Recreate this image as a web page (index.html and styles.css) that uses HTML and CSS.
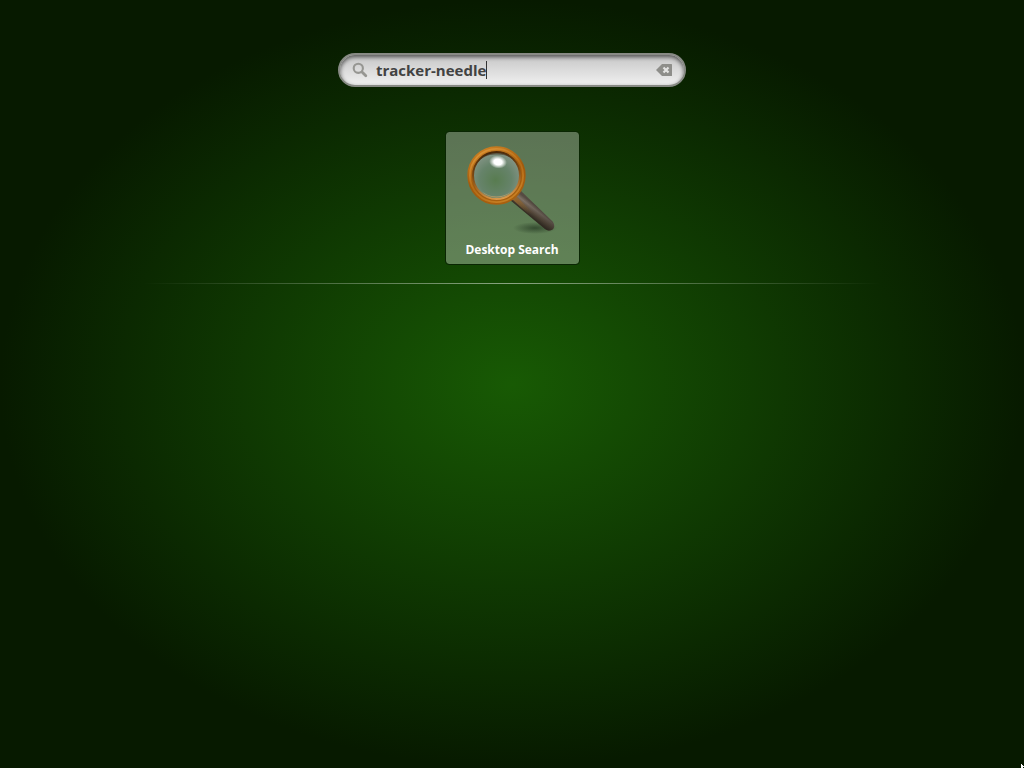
FILE: index.html
```html
<!DOCTYPE html>
<html lang="en">
<head>
<meta charset="utf-8">
<meta name="viewport" content="width=device-width, initial-scale=1">
<title>Overview</title>
<link rel="stylesheet" href="styles.css">
</head>
<body>
<main class="overview">
  <form class="search" role="search">
    <label class="search-label" for="query" aria-label="Search">
      <svg class="search-icon" viewBox="0 0 16 16" aria-hidden="true"><circle cx="6.3" cy="6.3" r="4.6" fill="none" stroke="#969692" stroke-width="2.1"/><path d="M10 10l3.800 3.800" stroke="#969692" stroke-width="2.8" stroke-linecap="round"/></svg>
    </label>
    <input class="query" id="query" type="text" value="tracker-needle" autocomplete="off" spellcheck="false">
    <span class="caret" aria-hidden="true"></span>
    <button class="clear" type="reset" aria-label="Clear search">
      <svg class="clear-icon" viewBox="0 0 16 16" aria-hidden="true"><path fill="#8e8e8a" d="M6 2H15.500a.5.5 0 0 1 .5.5v11a.5.5 0 0 1-.5.5H6L0 8z"/><path d="M7.500 5.500l5 5M12.500 5.500l-5 5" stroke="#e4e4e2" stroke-width="2.200"/></svg>
    </button>
  </form>
  <section class="results" aria-label="Applications">
    <button class="app" type="button">
      <svg class="app-icon" viewBox="0 0 96 96" aria-hidden="true">
        <defs>
          <linearGradient id="rim" x1="0.3" y1="0" x2="0.7" y2="1"><stop offset="0" stop-color="#c87c20"/><stop offset=".5" stop-color="#a05a0d"/><stop offset="1" stop-color="#a9600f"/></linearGradient>
          <linearGradient id="inner" x1="0.4" y1="0" x2="0.6" y2="1"><stop offset="0" stop-color="#4a2808"/><stop offset=".45" stop-color="#7d4a15"/><stop offset="1" stop-color="#dc9a4c"/></linearGradient>
          <linearGradient id="shine" x1="0.2" y1="0" x2=".8" y2="1"><stop offset="0" stop-color="#dc9538"/><stop offset=".5" stop-color="#c57b20" stop-opacity=".5"/><stop offset="1" stop-color="#c98226"/></linearGradient>
          <radialGradient id="glass" cx=".48" cy=".6" r=".58"><stop offset="0" stop-color="#587c50"/><stop offset=".6" stop-color="#66836a"/><stop offset="1" stop-color="#829384"/></radialGradient>
          <radialGradient id="spark"><stop offset="0" stop-color="#fff"/><stop offset=".45" stop-color="#fff"/><stop offset="1" stop-color="#fff" stop-opacity="0"/></radialGradient>
          <radialGradient id="shadow"><stop offset="0" stop-color="#122212" stop-opacity=".55"/><stop offset="1" stop-color="#122212" stop-opacity="0"/></radialGradient>
          <linearGradient id="handle" gradientUnits="userSpaceOnUse" x1="72" y1="66" x2="65" y2="75"><stop offset="0" stop-color="#554b42"/><stop offset=".3" stop-color="#7d7166"/><stop offset=".65" stop-color="#5d4f40"/><stop offset="1" stop-color="#342c22"/></linearGradient>
          <linearGradient id="tip" gradientUnits="userSpaceOnUse" x1="60" y1="60" x2="90" y2="90"><stop offset="0" stop-color="#2b2620" stop-opacity="0"/><stop offset="1" stop-color="#2b2620" stop-opacity=".55"/></linearGradient>
          <linearGradient id="ferrule" gradientUnits="userSpaceOnUse" x1="50" y1="58" x2="67" y2="74"><stop offset="0" stop-color="#96672f"/><stop offset="1" stop-color="#80602f" stop-opacity="0"/></linearGradient>
        </defs>
        <ellipse cx="71" cy="88" rx="22" ry="6" fill="url(#shadow)"/>
        <path id="stick" d="M56 50L88.500 81.500C92 85.500 90 91 84.500 90.500Q82.500 90.200 81 89L46 60z" fill="url(#handle)"/>
        <path d="M52 56L72 76L68 77L48 59z" fill="url(#ferrule)"/>
        <path d="M56 50L88.500 81.500C92 85.500 90 91 84.500 90.500Q82.500 90.200 81 89L46 60z" fill="url(#tip)"/>
        <circle cx="32.500" cy="35.500" r="23" fill="url(#glass)"/>
        <circle cx="32.500" cy="35.500" r="23.800" fill="none" stroke="url(#inner)" stroke-width="2.600"/>
        <circle cx="32.500" cy="35.500" r="26.800" fill="none" stroke="url(#rim)" stroke-width="4.800"/>
        <circle cx="32.500" cy="35.500" r="26.600" fill="none" stroke="url(#shine)" stroke-width="1.800"/>
        <path d="M14 22A22.500 22.500 0 0 1 51 22Q44 13.800 32.500 14.500Q21 13.800 14 22" fill="#3b2710" opacity=".55"/>
        <path d="M17 51A22 22 0 0 0 48 51Q41 56.500 32.500 56.500Q24 56.500 17 51" fill="#d9a76a" opacity=".7"/>
        <ellipse cx="34" cy="22" rx="9" ry="6.500" transform="rotate(8 34 22)" fill="url(#spark)"/>
      </svg>
      <span class="app-name">Desktop Search</span>
    </button>
  </section>
  <hr class="divider">
</main>
<svg class="pointer" viewBox="0 0 3 4" aria-hidden="true"><path d="M0 0h1v1h1v1h1v1H2v1H0z" fill="#fff"/></svg>
</body>
</html>
```
FILE: styles.css
```css
* {
  box-sizing: border-box;
}

body {
  margin: 0;
  min-height: 100vh;
  position: relative;
  overflow: hidden;
  font-family: "Open Sans", "Noto Sans", sans-serif;
  background: radial-gradient(ellipse farthest-side at center, #185a04 0%, #071a00 100%);
}

.overview {
  display: flex;
  flex-direction: column;
  align-items: center;
  padding-top: 53px;
}

.search {
  display: flex;
  align-items: center;
  width: 34%;
  min-width: 280px;
  height: 34px;
  padding: 0 12px;
  border: 2px solid #888a85;
  border-radius: 17px;
  background: linear-gradient(#c6c6c6, #f0f0f0);
  box-shadow: inset 0 2px 4px rgba(0, 0, 0, 0.6);
}

.search-label {
  display: flex;
  margin-right: 8px;
}

.search-icon,
.clear-icon {
  display: block;
  width: 16px;
  height: 16px;
}

.query {
  field-sizing: content;
  max-width: 80%;
  padding: 0;
  border: 0;
  outline: 0;
  background: transparent;
  color: #424242;
  font: 700 15px/20px "Open Sans", "Noto Sans", sans-serif;
}

.caret {
  width: 1px;
  height: 18px;
  background: #333;
}

.clear {
  margin-left: auto;
  padding: 0;
  border: 0;
  background: none;
}

.results {
  padding: 44px 0 18px;
}

.app {
  display: flex;
  flex-direction: column;
  align-items: center;
  gap: 4px;
  min-width: 135px;
  padding: 8px 16px 4px;
  border: 1px solid #0a2603;
  border-radius: 4px;
  background: rgba(255, 255, 255, 0.33);
  background-clip: padding-box;
  color: #fff;
  font: 700 12px/20px "Open Sans", "Noto Sans", sans-serif;
}

.app-icon {
  width: 96px;
  height: 96px;
}

.divider {
  width: 72%;
  height: 1px;
  margin: 0;
  border: 0;
  background: linear-gradient(90deg, transparent, rgba(255, 255, 255, 0.5), transparent);
}

.pointer {
  position: absolute;
  right: 0;
  bottom: 0;
  width: 3px;
  height: 4px;
}
```
